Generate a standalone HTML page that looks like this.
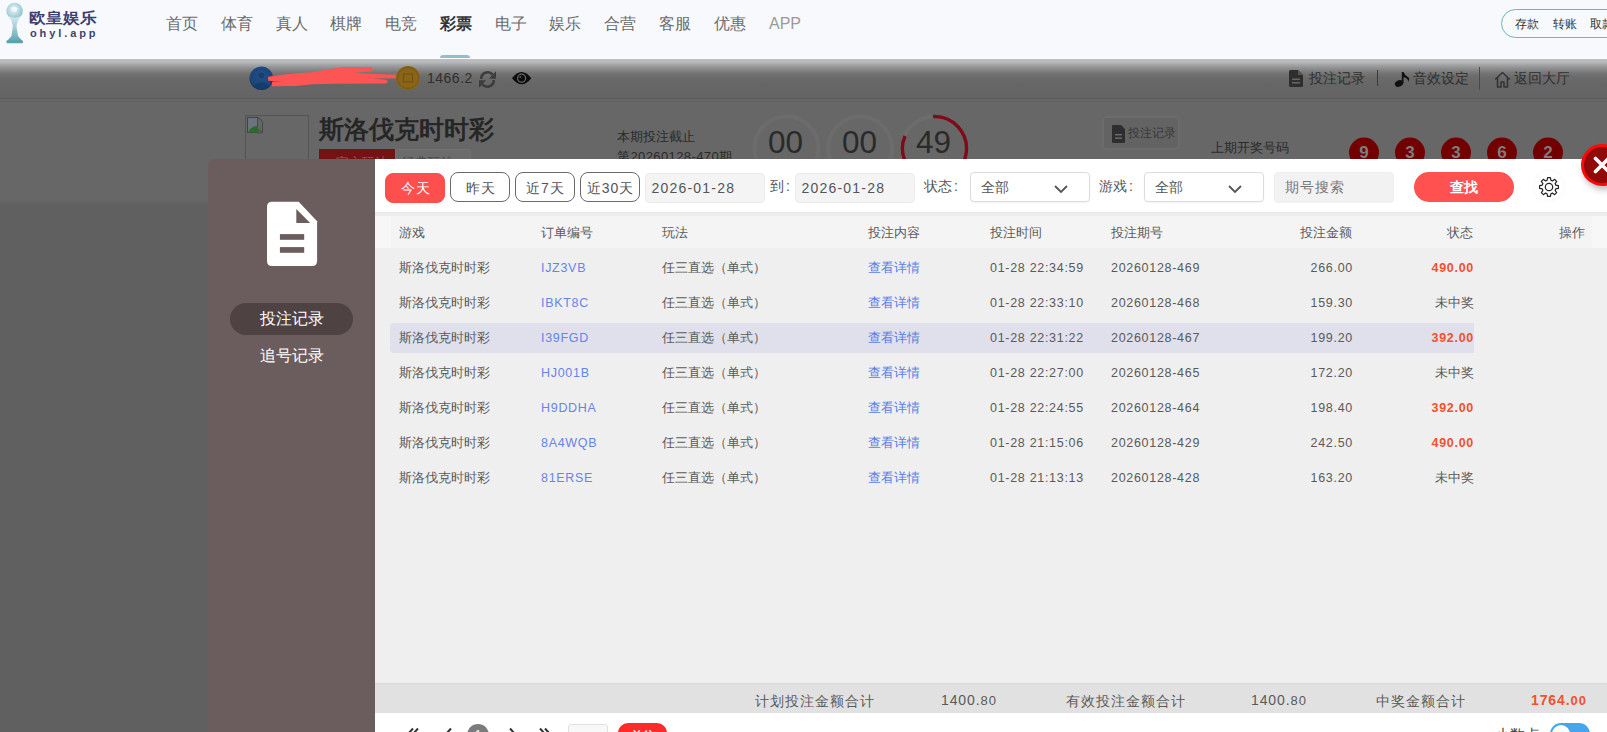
<!DOCTYPE html>
<html><head><meta charset="utf-8">
<style>
*{margin:0;padding:0;box-sizing:border-box}
html,body{width:1607px;height:732px;overflow:hidden}
body{position:relative;background:#606060;font-family:"Liberation Sans",sans-serif;color:#333}
.a{position:absolute;white-space:nowrap}
#nav{left:0;top:0;width:1607px;height:59px;background:#f8f9fd;border-bottom:1px solid #fdfdfe}
.ni{position:absolute;top:13.5px;font-size:16px;line-height:20px;color:#6b6b6b}
#hbar{left:0;top:59px;width:1607px;height:40px;background:linear-gradient(#bdbec0 0,#b9babc 3px,#a2a3a5 6px,#8a8a8b 10px,#767676 14px,#6b6b6b 18px,#666 26px,#646464 39px);border-bottom:1px solid #595959}
#game{left:0;top:99px;width:1607px;height:106px;background:linear-gradient(#676767 0,#676767 100px,#606060 106px)}
#side{left:208px;top:159px;width:167px;height:573px;background:#6b5d5d;border-top-left-radius:8px}
#main{left:375px;top:159px;width:1232px;height:573px;background:#fff}
.btn{width:60px;height:30px;border:1px solid #6a6a6a;border-radius:8px;background:#fff;color:#555;font-size:14px;line-height:30px;text-align:center;letter-spacing:1px;text-indent:1px}
.btn.on{background:#fe4f4f;border-color:#fe4f4f;color:#fff;line-height:28px}
.inp{height:30px;background:#f4f4f4;border:1px solid #ececec;border-radius:4px;color:#555;font-size:14px;line-height:28px;padding-left:5.5px;letter-spacing:1.2px}
.lbl{top:177px;font-size:14px;line-height:18px;color:#555}
.sel{width:120px;height:30px;background:#fff;border:1px solid #dcdcdc;border-radius:4px;box-shadow:0 1px 2px rgba(0,0,0,0.05);color:#555;font-size:14px;line-height:28px;padding-left:10px}
.chev{position:absolute;left:83px;top:11.5px}
.th{font-size:13px;line-height:17px;color:#5a5a5a}
.td{font-size:13px;line-height:18px;color:#5a5a5a}
.num{font-size:12.5px;letter-spacing:0.7px}
.sm{top:691.5px;font-size:14px;line-height:18px;color:#5a5a5a;letter-spacing:0.95px}
.num2{font-size:14px;letter-spacing:0.9px;top:691px}
.pg{top:722px;font-size:18px;line-height:20px;color:#333}
</style></head><body>
<!-- top nav -->
<div id="nav" class="a">
  <svg class="a" style="left:0;top:0" width="30" height="48" viewBox="0 0 30 48">
    <defs><linearGradient id="tg" x1="0" y1="0" x2="0" y2="1"><stop offset="0" stop-color="#d5ebf0"/><stop offset="0.5" stop-color="#9fcad3"/><stop offset="1" stop-color="#5ea6b2"/></linearGradient>
    <radialGradient id="bg1" cx="0.45" cy="0.4" r="0.6"><stop offset="0" stop-color="#eaf5f7"/><stop offset="1" stop-color="#8dc3cd"/></radialGradient></defs>
    <circle cx="14.6" cy="11" r="8.3" fill="url(#bg1)"/>
    <path d="M11 8 L14 6.5 L17.5 8 L16.5 11.5 L12.5 11.5 Z" fill="#f4fafb"/>
    <path d="M8.5 16 Q12.5 21 12.8 26 L11.5 36 L7 41 H22.5 L18 36 L16.5 26 Q17 21 21 16 Q15 19.5 8.5 16 Z" fill="url(#tg)"/>
    <rect x="6.5" y="40.5" width="16.5" height="2.8" rx="0.8" fill="#5aa2ae"/>
  </svg>
  <div class="a" style="left:29px;top:7px;font-size:17px;line-height:20px;font-weight:bold;color:#3b4071;transform:scaleY(0.9);transform-origin:0 100%">欧皇娱乐</div>
  <div class="a" style="left:30px;top:27px;font-size:11px;line-height:12px;font-weight:bold;color:#3d4272;letter-spacing:2.9px">ohyl.app</div>
  <div class="ni" style="left:166px">首页</div>
  <div class="ni" style="left:221px">体育</div>
  <div class="ni" style="left:276px">真人</div>
  <div class="ni" style="left:330px">棋牌</div>
  <div class="ni" style="left:385px">电竞</div>
  <div class="ni" style="left:440px;color:#333;font-weight:bold">彩票</div>
  <div class="ni" style="left:495px">电子</div>
  <div class="ni" style="left:549px">娱乐</div>
  <div class="ni" style="left:604px">合营</div>
  <div class="ni" style="left:659px">客服</div>
  <div class="ni" style="left:714px">优惠</div>
  <div class="ni" style="left:769px;color:#999">APP</div>
  <div class="a" style="left:440px;top:55px;width:30px;height:3px;background:#8fc1cb;border-radius:3px 3px 0 0"></div>
  <div class="a" style="left:1501px;top:9px;width:130px;height:29px;border:1px solid #6db5b9;border-radius:15px"></div>
  <div class="a" style="left:1515px;top:17px;font-size:12px;line-height:15px;color:#333">存款</div>
  <div class="a" style="left:1552.5px;top:17px;font-size:12px;line-height:15px;color:#333">转账</div>
  <div class="a" style="left:1589.5px;top:17px;font-size:12px;line-height:15px;color:#333">取款</div>
</div>
<div id="hbar" class="a"></div>
<!-- header bar content -->
<svg class="a" style="left:249px;top:65px" width="26" height="26" viewBox="0 0 26 26">
  <defs><radialGradient id="av" cx="0.5" cy="0.4" r="0.6"><stop offset="0" stop-color="#22508c"/><stop offset="0.8" stop-color="#1b4477"/><stop offset="1" stop-color="#10305c"/></radialGradient></defs>
  <circle cx="12.3" cy="13.3" r="11.8" fill="url(#av)"/>
  <circle cx="12.3" cy="10.5" r="3.8" fill="#193f70" stroke="#255288" stroke-width="1"/>
  <path d="M5 21 Q12.3 13.5 19.6 21 Q12.3 26 5 21 Z" fill="#173c6b"/>
</svg>
<svg class="a" style="left:0;top:0" width="420" height="100" viewBox="0 0 420 100">
  <path d="M268 76.8 L280 75 L296 73.2 L312 72.3 L332 68.8 L344 67 L371 67 Q374.5 69 371 71.2 L355 72.5 L364 73.5 L398 74.7 L398 78.2 L373 78.5 L386 79.8 Q389.5 81.7 386 83.6 L336 83.8 L312 84.2 L296 86 L272 86.2 L272 82 L283 81.4 L268 80.8 Z" fill="#fd5454"/>
</svg>
<svg class="a" style="left:395px;top:65px" width="26" height="26" viewBox="0 0 26 26">
  <circle cx="13" cy="13" r="12" fill="#8a6517"/>
  <circle cx="13" cy="13" r="10.5" fill="none" stroke="#7a5810" stroke-width="1"/>
  <rect x="8.5" y="9" width="9" height="8" fill="none" stroke="#735310" stroke-width="1.2"/>
</svg>
<div class="a" style="left:427px;top:69px;font-size:14px;line-height:18px;color:#2e2e2e;letter-spacing:0.5px">1466.2</div>
<svg class="a" style="left:476px;top:68px" width="24" height="22" viewBox="476 68 24 22">
  <path d="M481.2 79 A6.5 6.5 0 0 1 492.6 74.6" fill="none" stroke="#3c3c3c" stroke-width="2.6"/>
  <path d="M489 78.8 L496 78.8 L496 71.2 Z" fill="#3c3c3c"/>
  <path d="M493.8 80 A6.5 6.5 0 0 1 482.4 84.4" fill="none" stroke="#3c3c3c" stroke-width="2.6"/>
  <path d="M486 80.2 L479 80.2 L479 87.8 Z" fill="#3c3c3c"/>
</svg>
<svg class="a" style="left:510px;top:69px" width="24" height="18" viewBox="510 69 24 18">
  <path d="M512 78.2 Q521.6 66 531.3 78.2 Q521.6 90.4 512 78.2 Z" fill="#0d0d0d"/>
  <circle cx="521.6" cy="78.2" r="4.6" fill="#6a6a6a"/>
  <circle cx="521.6" cy="78.2" r="3.4" fill="#0d0d0d"/>
  <circle cx="520.3" cy="77" r="1" fill="#555"/>
</svg>
<!-- right header -->
<svg class="a" style="left:1289px;top:70px" width="14" height="17" viewBox="0 0 14 17">
  <path d="M1.5 0 H9 L14 5 V15.5 Q14 17 12.5 17 H1.5 Q0 17 0 15.5 V1.5 Q0 0 1.5 0 Z" fill="#2e2e2e"/>
  <path d="M9 0 V5 H14 Z" fill="#555"/>
  <rect x="3" y="8.5" width="8" height="1.6" fill="#666"/>
  <rect x="3" y="12" width="8" height="1.6" fill="#666"/>
</svg>
<div class="a" style="left:1309px;top:69px;font-size:14px;line-height:18px;color:#2e2e2e">投注记录</div>
<div class="a" style="left:1377px;top:70px;width:1px;height:16px;background:#3a3a3a"></div>
<svg class="a" style="left:1394px;top:71px" width="17" height="16" viewBox="0 0 17 16">
  <ellipse cx="5" cy="12.5" rx="4.3" ry="3.2" fill="#111" transform="rotate(-20 5 12.5)"/>
  <path d="M7.8 12 V1 L9.5 1 Q11 5 14.5 6.5 Q16 8 14 11 Q15 8 9.5 6 V12 Z" fill="#111"/>
</svg>
<div class="a" style="left:1413px;top:69px;font-size:14px;line-height:18px;color:#2e2e2e">音效设定</div>
<div class="a" style="left:1479px;top:67px;width:1px;height:23px;background:#4a4a4a"></div>
<svg class="a" style="left:1494px;top:71px" width="17" height="17" viewBox="0 0 17 17">
  <path d="M1.2 8.5 L8.5 1.5 L15.8 8.5 M3.5 6.5 V16 H7 V11 H10 V16 H13.5 V6.5" fill="none" stroke="#333" stroke-width="1.5" stroke-linejoin="round"/>
</svg>
<div class="a" style="left:1514px;top:69px;font-size:14px;line-height:18px;color:#2e2e2e">返回大厅</div>
<div id="game" class="a"></div>
<div class="a" style="left:0;top:101px;width:1607px;height:1px;background:#626262"></div>
<!-- game info -->
<div class="a" style="left:245px;top:115px;width:64px;height:60px;border:1px solid #545454;border-bottom:none"></div>
<svg class="a" style="left:247px;top:117px" width="17" height="17" viewBox="0 0 17 17">
  <rect x="0.5" y="0.5" width="10" height="15" fill="#6c7280" stroke="#444" stroke-width="1"/>
  <path d="M10.5 0.5 L14 2.5 L15.5 5 V16 H10.5 Z" fill="#656565" stroke="#444" stroke-width="0.8"/>
  <path d="M1 15.5 Q3 10 9 9 L11 10 V15.5 Z" fill="#2a6d2a"/>
  <path d="M11 11 L15 14 V16 H11 Z" fill="#505a50"/>
</svg>
<div class="a" style="left:319px;top:116px;font-size:24.5px;line-height:28px;font-weight:bold;color:#262626">斯洛伐克时时彩</div>
<div class="a" style="left:319px;top:149px;width:76px;height:12px;background:#731313"></div>
<div class="a" style="left:395px;top:149px;width:76px;height:12px;background:#6c6c6c;border:1px solid #727272;border-bottom:none;border-radius:0 3px 0 0"></div>
<div class="a" style="left:336px;top:155px;font-size:13px;line-height:16px;color:#8a5a5a">官方玩法</div>
<div class="a" style="left:402px;top:155px;font-size:13px;line-height:16px;color:#474747">经典玩法</div>
<div class="a" style="left:617px;top:129px;font-size:13px;line-height:16px;color:#2a2a2a">本期投注截止</div>
<div class="a" style="left:617px;top:149px;font-size:13px;line-height:16px;color:#2a2a2a;letter-spacing:0.4px">第20260128-470期</div>
<svg class="a" style="left:740px;top:100px" width="240" height="60" viewBox="740 100 240 60">
  <circle cx="786.5" cy="148.5" r="32" fill="none" stroke="#6c6c6c" stroke-width="4"/>
  <circle cx="860.2" cy="148.5" r="32" fill="none" stroke="#6c6c6c" stroke-width="4"/>
  <circle cx="934" cy="148.5" r="32" fill="none" stroke="#6c6c6c" stroke-width="4"/>
  <path d="M933 116.5 A32 32 0 1 1 905 136" fill="none" stroke="#7e0a1a" stroke-width="3.4"/>
</svg>
<div class="a" style="left:768px;top:124px;font-size:31.5px;line-height:36px;color:#2a2a2a">00</div>
<div class="a" style="left:842px;top:124px;font-size:31.5px;line-height:36px;color:#2a2a2a">00</div>
<div class="a" style="left:916px;top:124px;font-size:31.5px;line-height:36px;color:#2a2a2a">49</div>
<div class="a" style="left:1102px;top:116px;width:78px;height:34px;background:#636363;border:2px solid #6c6c6c;border-radius:5px"></div>
<svg class="a" style="left:1112px;top:125px" width="13" height="18" viewBox="0 0 13 18">
  <path d="M1 0 H9 L13 4 V17 Q13 18 12 18 H1 Q0 18 0 17 V1 Q0 0 1 0 Z" fill="#2e2e2e"/>
  <rect x="3" y="9" width="7" height="1.4" fill="#6e6e6e"/>
  <rect x="3" y="12.5" width="7" height="1.4" fill="#6e6e6e"/>
</svg>
<div class="a" style="left:1128px;top:126px;font-size:12px;line-height:15px;color:#383838;letter-spacing:0.1px">投注记录</div>
<div class="a" style="left:1211px;top:140px;font-size:13px;line-height:16px;color:#2a2a2a">上期开奖号码</div>
<svg class="a" style="left:1340px;top:130px" width="230" height="30" viewBox="1340 130 230 30">
  <circle cx="1364" cy="152.5" r="15" fill="#730000"/>
  <circle cx="1410" cy="152.5" r="15" fill="#730000"/>
  <circle cx="1456" cy="152.5" r="15" fill="#730000"/>
  <circle cx="1502" cy="152.5" r="15" fill="#730000"/>
  <circle cx="1548" cy="152.5" r="15" fill="#730000"/>
</svg>
<div class="a" style="left:1356px;top:143px;width:16px;text-align:center;font-size:17px;line-height:20px;font-weight:bold;color:#7d7d7d">9</div>
<div class="a" style="left:1402px;top:143px;width:16px;text-align:center;font-size:17px;line-height:20px;font-weight:bold;color:#7d7d7d">3</div>
<div class="a" style="left:1448px;top:143px;width:16px;text-align:center;font-size:17px;line-height:20px;font-weight:bold;color:#7d7d7d">3</div>
<div class="a" style="left:1494px;top:143px;width:16px;text-align:center;font-size:17px;line-height:20px;font-weight:bold;color:#7d7d7d">6</div>
<div class="a" style="left:1540px;top:143px;width:16px;text-align:center;font-size:17px;line-height:20px;font-weight:bold;color:#7d7d7d">2</div>
<div id="side" class="a"></div>
<svg class="a" style="left:266px;top:201px" width="52" height="66" viewBox="266 201 52 66">
  <path d="M272 201.8 H298.7 L317.1 221.2 V261 Q317.1 266.1 312 266.1 H272 Q267 266.1 267 261 V207 Q267 201.8 272 201.8 Z" fill="#fff"/>
  <path d="M296.3 209 V222.9 H310.2 Z" fill="#6b5d5d"/>
  <rect x="279.9" y="234.1" width="24.3" height="5.7" fill="#6b5d5d"/>
  <rect x="279.9" y="247.1" width="24.3" height="5.7" fill="#6b5d5d"/>
</svg>
<div class="a" style="left:230px;top:303px;width:123px;height:32px;border-radius:16px;background:#4e4242"></div>
<div class="a" style="left:230px;top:309px;width:123px;text-align:center;font-size:16px;line-height:20px;color:#fff">投注记录</div>
<div class="a" style="left:230px;top:346px;width:123px;text-align:center;font-size:16px;line-height:20px;color:#fff">追号记录</div>
<div id="main" class="a"></div>
<!-- toolbar -->
<div class="a btn on" style="left:385px;top:173px">今天</div>
<div class="a btn" style="left:450px;top:172px">昨天</div>
<div class="a btn" style="left:515px;top:172px">近7天</div>
<div class="a btn" style="left:580px;top:172px">近30天</div>
<div class="a inp" style="left:645px;top:173px;width:120px">2026-01-28</div>
<div class="a lbl" style="left:770px">到<span style="margin-left:2px">:</span></div>
<div class="a inp" style="left:795px;top:173px;width:120px">2026-01-28</div>
<div class="a lbl" style="left:924px">状态<span style="margin-left:2px">:</span></div>
<div class="a sel" style="left:970px;top:172px">全部<svg class="chev" width="14" height="9" viewBox="0 0 14 9"><path d="M1 1 L7 7 L13 1" fill="none" stroke="#555" stroke-width="1.8"/></svg></div>
<div class="a lbl" style="left:1099px">游戏<span style="margin-left:2px">:</span></div>
<div class="a sel" style="left:1144px;top:172px">全部<svg class="chev" width="14" height="9" viewBox="0 0 14 9"><path d="M1 1 L7 7 L13 1" fill="none" stroke="#555" stroke-width="1.8"/></svg></div>
<div class="a inp" style="left:1274px;top:172px;width:120px;color:#777;letter-spacing:1px;padding-left:10px;background:#f2f2f2;border-color:#f0f0f0;box-shadow:0 1px 1px rgba(0,0,0,0.06)">期号搜索</div>
<div class="a" style="left:1414px;top:172px;width:100px;height:30px;border-radius:15px;background:#fe5150;color:#fff;font-size:14px;line-height:30px;text-align:center;font-weight:bold">查找</div>
<div class="a" style="left:1534px;top:171px;width:30px;height:30px;border-radius:15px;background:#fff;box-shadow:0 0 3px rgba(0,0,0,0.06)"></div>
<svg class="a" style="left:1537px;top:175px" width="24" height="24" viewBox="0 0 24 24">
  <path d="M10.07 5.27 L10.58 2.61 L13.42 2.61 L13.93 5.27 L15.39 5.88 L17.64 4.35 L19.65 6.36 L18.12 8.61 L18.73 10.07 L21.39 10.58 L21.39 13.42 L18.73 13.93 L18.12 15.39 L19.65 17.64 L17.64 19.65 L15.39 18.12 L13.93 18.73 L13.42 21.39 L10.58 21.39 L10.07 18.73 L8.61 18.12 L6.36 19.65 L4.35 17.64 L5.88 15.39 L5.27 13.93 L2.61 13.42 L2.61 10.58 L5.27 10.07 L5.88 8.61 L4.35 6.36 L6.36 4.35 L8.61 5.88 Z" fill="none" stroke="#222" stroke-width="1.2" stroke-linejoin="round"/>
  <circle cx="12" cy="12" r="3.7" fill="none" stroke="#222" stroke-width="1.2"/>
</svg>
<div class="a" style="left:375px;top:212px;width:1232px;height:1px;background:#e6e6e6"></div>
<div class="a" style="left:375px;top:213px;width:1232px;height:470px;background:#efefef"></div>
<div class="a" style="left:375px;top:213px;width:1232px;height:3px;background:#eeeeee"></div>
<div class="a" style="left:375px;top:216px;width:1232px;height:32px;background:#f7f7f7"></div>
<div class="a" style="left:391px;top:216px;width:1201px;height:32px;background:#f4f4f4"></div>
<!-- table -->
<div class="a th" style="left:399px;top:224px">游戏</div>
<div class="a th" style="left:541px;top:224px">订单编号</div>
<div class="a th" style="left:662px;top:224px">玩法</div>
<div class="a th" style="left:868px;top:224px">投注内容</div>
<div class="a th" style="left:990px;top:224px">投注时间</div>
<div class="a th" style="left:1111px;top:224px">投注期号</div>
<div class="a th" style="left:1252px;top:224px;width:100px;text-align:right">投注金额</div>
<div class="a th" style="left:1373px;top:224px;width:100px;text-align:right">状态</div>
<div class="a th" style="left:1485px;top:224px;width:100px;text-align:right">操作</div>
<div class="a" style="left:390px;top:323px;width:1084px;height:30px;background:#dfe0eb;border-radius:4px 0 0 4px"></div>
<div class="a td" style="left:399px;top:259px">斯洛伐克时时彩</div>
<div class="a td num" style="left:541px;top:259px;color:#6685ea">IJZ3VB</div>
<div class="a td" style="left:662px;top:259px">任三直选（单式）</div>
<div class="a td" style="left:868px;top:259px;color:#5b7fe6">查看详情</div>
<div class="a td num" style="left:990px;top:259px">01-28 22:34:59</div>
<div class="a td num" style="left:1111px;top:259px">20260128-469</div>
<div class="a td num" style="left:1253px;top:259px;width:100px;text-align:right">266.00</div>
<div class="a td num" style="left:1374px;top:259px;width:100px;text-align:right;color:#f2512e;font-weight:bold">490.00</div>
<div class="a td" style="left:399px;top:294px">斯洛伐克时时彩</div>
<div class="a td num" style="left:541px;top:294px;color:#6685ea">IBKT8C</div>
<div class="a td" style="left:662px;top:294px">任三直选（单式）</div>
<div class="a td" style="left:868px;top:294px;color:#5b7fe6">查看详情</div>
<div class="a td num" style="left:990px;top:294px">01-28 22:33:10</div>
<div class="a td num" style="left:1111px;top:294px">20260128-468</div>
<div class="a td num" style="left:1253px;top:294px;width:100px;text-align:right">159.30</div>
<div class="a td" style="left:1374px;top:294px;width:100px;text-align:right">未中奖</div>
<div class="a td" style="left:399px;top:329px">斯洛伐克时时彩</div>
<div class="a td num" style="left:541px;top:329px;color:#6685ea">I39FGD</div>
<div class="a td" style="left:662px;top:329px">任三直选（单式）</div>
<div class="a td" style="left:868px;top:329px;color:#5b7fe6">查看详情</div>
<div class="a td num" style="left:990px;top:329px">01-28 22:31:22</div>
<div class="a td num" style="left:1111px;top:329px">20260128-467</div>
<div class="a td num" style="left:1253px;top:329px;width:100px;text-align:right">199.20</div>
<div class="a td num" style="left:1374px;top:329px;width:100px;text-align:right;color:#f2512e;font-weight:bold">392.00</div>
<div class="a td" style="left:399px;top:364px">斯洛伐克时时彩</div>
<div class="a td num" style="left:541px;top:364px;color:#6685ea">HJ001B</div>
<div class="a td" style="left:662px;top:364px">任三直选（单式）</div>
<div class="a td" style="left:868px;top:364px;color:#5b7fe6">查看详情</div>
<div class="a td num" style="left:990px;top:364px">01-28 22:27:00</div>
<div class="a td num" style="left:1111px;top:364px">20260128-465</div>
<div class="a td num" style="left:1253px;top:364px;width:100px;text-align:right">172.20</div>
<div class="a td" style="left:1374px;top:364px;width:100px;text-align:right">未中奖</div>
<div class="a td" style="left:399px;top:399px">斯洛伐克时时彩</div>
<div class="a td num" style="left:541px;top:399px;color:#6685ea">H9DDHA</div>
<div class="a td" style="left:662px;top:399px">任三直选（单式）</div>
<div class="a td" style="left:868px;top:399px;color:#5b7fe6">查看详情</div>
<div class="a td num" style="left:990px;top:399px">01-28 22:24:55</div>
<div class="a td num" style="left:1111px;top:399px">20260128-464</div>
<div class="a td num" style="left:1253px;top:399px;width:100px;text-align:right">198.40</div>
<div class="a td num" style="left:1374px;top:399px;width:100px;text-align:right;color:#f2512e;font-weight:bold">392.00</div>
<div class="a td" style="left:399px;top:434px">斯洛伐克时时彩</div>
<div class="a td num" style="left:541px;top:434px;color:#6685ea">8A4WQB</div>
<div class="a td" style="left:662px;top:434px">任三直选（单式）</div>
<div class="a td" style="left:868px;top:434px;color:#5b7fe6">查看详情</div>
<div class="a td num" style="left:990px;top:434px">01-28 21:15:06</div>
<div class="a td num" style="left:1111px;top:434px">20260128-429</div>
<div class="a td num" style="left:1253px;top:434px;width:100px;text-align:right">242.50</div>
<div class="a td num" style="left:1374px;top:434px;width:100px;text-align:right;color:#f2512e;font-weight:bold">490.00</div>
<div class="a td" style="left:399px;top:469px">斯洛伐克时时彩</div>
<div class="a td num" style="left:541px;top:469px;color:#6685ea">81ERSE</div>
<div class="a td" style="left:662px;top:469px">任三直选（单式）</div>
<div class="a td" style="left:868px;top:469px;color:#5b7fe6">查看详情</div>
<div class="a td num" style="left:990px;top:469px">01-28 21:13:13</div>
<div class="a td num" style="left:1111px;top:469px">20260128-428</div>
<div class="a td num" style="left:1253px;top:469px;width:100px;text-align:right">163.20</div>
<div class="a td" style="left:1374px;top:469px;width:100px;text-align:right">未中奖</div>
<!-- summary -->
<div class="a" style="left:375px;top:683px;width:1232px;height:1px;background:#d9d9d9"></div>
<div class="a" style="left:375px;top:684px;width:1232px;height:29px;background:#e1e1e1"></div>
<div class="a sm" style="left:755px">计划投注金额合计</div>
<div class="a sm num2" style="left:941px">1400.<span style="font-size:13px">80</span></div>
<div class="a sm" style="left:1066px">有效投注金额合计</div>
<div class="a sm num2" style="left:1251px">1400.<span style="font-size:13px">80</span></div>
<div class="a sm" style="left:1376px">中奖金额合计</div>
<div class="a sm num2" style="left:1531px;color:#f2512e;font-weight:bold">1764.<span style="font-size:13px">00</span></div>
<!-- pagination -->
<svg class="a" style="left:400px;top:724px" width="160" height="8" viewBox="400 724 160 8">
  <path d="M413 728.5 L408 734 L413 739.5 M418 728.5 L413 734 L418 739.5 M451 728.5 L446 734 L451 739.5 M510 728.5 L515 734 L510 739.5 M540 728.5 L545 734 L540 739.5 M545 728.5 L550 734 L545 739.5" fill="none" stroke="#333" stroke-width="2"/>
</svg>
<div class="a" style="left:467px;top:724px;width:22px;height:22px;border-radius:11px;background:#7b7b7b;color:#fff;font-size:12px;line-height:22px;text-align:center">1</div>
<div class="a" style="left:568px;top:724px;width:40px;height:24px;border:1px solid #e0e0e0;background:#f8f8f8;border-radius:3px"></div>
<div class="a" style="left:618px;top:723px;width:49px;height:26px;border-radius:10px;background:#fe2b2b;color:#fff;font-size:12px;line-height:26px;text-align:center;font-weight:bold">前往</div>
<div class="a" style="left:1495px;top:726px;font-size:15px;line-height:18px;color:#444">小数点</div>
<div class="a" style="left:1550px;top:723px;width:40px;height:22px;border-radius:11px;background:#45a6ef"></div>
<div class="a" style="left:1552px;top:725px;width:18px;height:18px;border-radius:9px;background:#fff"></div>
<!-- close -->
<div class="a" style="left:1581px;top:144px;width:42px;height:42px;border-radius:21px;background:#920909;border:3px solid #ff0808;box-shadow:2px 4px 6px rgba(0,0,0,0.25)"></div>
<svg class="a" style="left:1590px;top:153px" width="24" height="24" viewBox="0 0 24 24">
  <path d="M5.5 5.5 L18.5 18.5 M18.5 5.5 L5.5 18.5" stroke="#fff" stroke-width="3.6" stroke-linecap="round"/>
</svg>
</body></html>
